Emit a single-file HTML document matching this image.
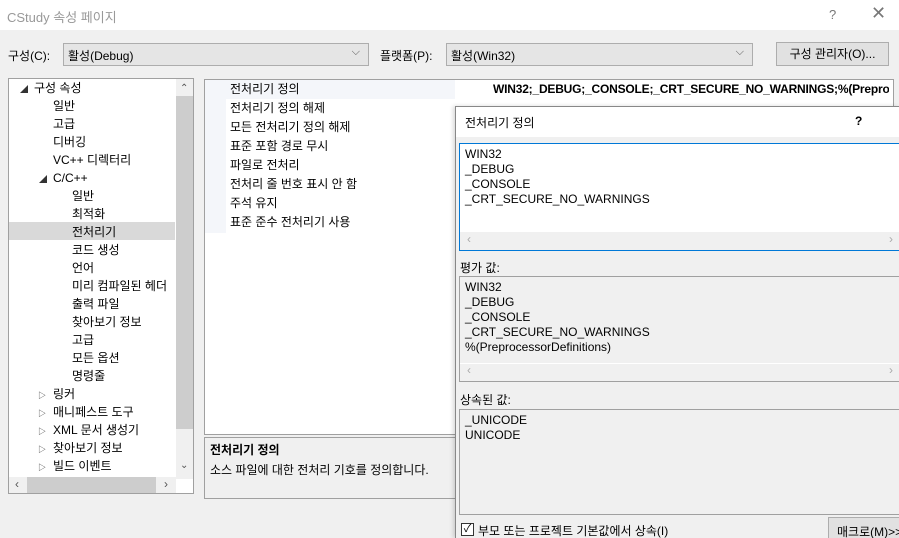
<!DOCTYPE html>
<html style="overflow:hidden"><head><meta charset="utf-8"><style>
*{box-sizing:border-box;margin:0;padding:0}
html,body{width:899px;height:538px;overflow:hidden}
body{background:#f0f0f0;font-family:"Liberation Sans","Noto Sans CJK KR",sans-serif;font-size:12px;color:#000;position:relative}
.a{position:absolute;white-space:nowrap}
.combo{position:absolute;background:#e5e5e5;border:1px solid #adadad;height:23px;padding:3px 0 0 4px}
.combo .v{position:absolute;right:8px;top:2px;color:#555;font-size:11px}
.t{position:absolute;white-space:nowrap;line-height:18px}
.tri{font-size:8px;color:#333}
</style></head><body>
<div class="a" style="left:0;top:0;width:899px;height:30px;background:#fff"></div>
<div class="a" style="left:7px;top:7px;font-size:13px;color:#999">CStudy 속성 페이지</div>
<div class="a" style="left:829px;top:7px;color:#777;font-size:13px">?</div>
<div class="a" style="left:871px;top:3px;color:#777;font-size:18px">✕</div>

<div class="a" style="left:8px;top:47px">구성(C):</div>
<div class="combo" style="left:63px;top:43px;width:306px">활성(Debug)<span class="v">⌵</span></div>
<div class="a" style="left:380px;top:47px">플랫폼(P):</div>
<div class="combo" style="left:446px;top:43px;width:307px">활성(Win32)<span class="v">⌵</span></div>
<div class="a" style="left:776px;top:42px;width:113px;height:24px;background:#e1e1e1;border:1px solid #adadad;text-align:center;line-height:22px">구성 관리자(O)...</div>

<!-- tree -->
<div class="a" style="left:8px;top:78px;width:186px;height:416px;background:#fff;border:1px solid #a0a0a0"></div>
<div class="a" style="left:176px;top:79px;width:17px;height:400px;background:#f0f0f0"></div>
<div class="a" style="left:176px;top:96px;width:17px;height:333px;background:#cdcdcd"></div>
<div class="a" style="left:180px;top:83px;font-size:10px;color:#555">⌃</div>
<div class="a" style="left:180px;top:460px;font-size:10px;color:#555">⌄</div>
<div class="a" style="left:9px;top:477px;width:167px;height:16px;background:#f0f0f0"></div>
<div class="a" style="left:27px;top:477px;width:129px;height:16px;background:#cdcdcd"></div>
<div class="a" style="left:15px;top:477px;color:#555">‹</div>
<div class="a" style="left:164px;top:477px;color:#555">›</div>
<div class="a" style="left:9px;top:222px;width:166px;height:18px;background:#d9d9d9"></div>
<div class="t" style="left:20px;top:79px"><span class="tri">◢</span></div>
<div class="t" style="left:34px;top:79px">구성 속성</div>
<div class="t" style="left:53px;top:97px">일반</div>
<div class="t" style="left:53px;top:115px">고급</div>
<div class="t" style="left:53px;top:133px">디버깅</div>
<div class="t" style="left:53px;top:151px">VC++ 디렉터리</div>
<div class="t" style="left:39px;top:169px"><span class="tri">◢</span></div>
<div class="t" style="left:53px;top:169px">C/C++</div>
<div class="t" style="left:72px;top:187px">일반</div>
<div class="t" style="left:72px;top:205px">최적화</div>
<div class="t" style="left:72px;top:223px">전처리기</div>
<div class="t" style="left:72px;top:241px">코드 생성</div>
<div class="t" style="left:72px;top:259px">언어</div>
<div class="t" style="left:72px;top:277px">미리 컴파일된 헤더</div>
<div class="t" style="left:72px;top:295px">출력 파일</div>
<div class="t" style="left:72px;top:313px">찾아보기 정보</div>
<div class="t" style="left:72px;top:331px">고급</div>
<div class="t" style="left:72px;top:349px">모든 옵션</div>
<div class="t" style="left:72px;top:367px">명령줄</div>
<div class="t" style="left:38px;top:385px"><span class="tri">▷</span></div><div class="t" style="left:53px;top:385px">링커</div>
<div class="t" style="left:38px;top:403px"><span class="tri">▷</span></div><div class="t" style="left:53px;top:403px">매니페스트 도구</div>
<div class="t" style="left:38px;top:421px"><span class="tri">▷</span></div><div class="t" style="left:53px;top:421px">XML 문서 생성기</div>
<div class="t" style="left:38px;top:439px"><span class="tri">▷</span></div><div class="t" style="left:53px;top:439px">찾아보기 정보</div>
<div class="t" style="left:38px;top:457px"><span class="tri">▷</span></div><div class="t" style="left:53px;top:457px">빌드 이벤트</div>

<!-- grid -->
<div class="a" style="left:204px;top:79px;width:690px;height:356px;background:#fff;border:1px solid #a0a0a0"></div>
<div class="a" style="left:205px;top:80px;width:250px;height:153px;background:#f4f6fa"></div>
<div class="a" style="left:226px;top:99px;width:229px;height:134px;background:#fff"></div>
<div class="t" style="left:230px;top:80px">전처리기 정의</div>
<div class="t" style="left:230px;top:99px">전처리기 정의 해제</div>
<div class="t" style="left:230px;top:118px">모든 전처리기 정의 해제</div>
<div class="t" style="left:230px;top:137px">표준 포함 경로 무시</div>
<div class="t" style="left:230px;top:156px">파일로 전처리</div>
<div class="t" style="left:230px;top:175px">전처리 줄 번호 표시 안 함</div>
<div class="t" style="left:230px;top:194px">주석 유지</div>
<div class="t" style="left:230px;top:213px">표준 준수 전처리기 사용</div>
<div class="t" style="left:493px;top:80px;font-weight:bold;width:396px;overflow:hidden;letter-spacing:-0.2px">WIN32;_DEBUG;_CONSOLE;_CRT_SECURE_NO_WARNINGS;%(PreprocessorDefinitions)</div>

<div class="a" style="left:204px;top:437px;width:260px;height:62px;border:1px solid #a0a0a0"></div>
<div class="a" style="left:210px;top:441px;font-weight:bold">전처리기 정의</div>
<div class="a" style="left:210px;top:461px">소스 파일에 대한 전처리 기호를 정의합니다.</div>

<!-- dialog -->
<div class="a" style="left:455px;top:106px;width:444px;height:432px;background:#f0f0f0;border:1px solid #888;border-right:none;border-bottom:none;box-shadow:-2px 0 4px rgba(0,0,0,.15)"></div>
<div class="a" style="left:456px;top:107px;width:443px;height:30px;background:#fff"></div>
<div class="a" style="left:465px;top:114px">전처리기 정의</div>
<div class="a" style="left:855px;top:114px;font-weight:bold">?</div>
<div class="a" style="left:459px;top:143px;width:440px;height:108px;background:#fff;border:1px solid #0078d7;border-right:none"></div>
<div class="a" style="left:460px;top:232px;width:439px;height:18px;background:#f0f0f0"></div>
<div class="a" style="left:467px;top:232px;color:#aaa">‹</div>
<div class="a" style="left:889px;top:232px;color:#aaa">›</div>
<div class="a" style="left:465px;top:147px;line-height:15px">WIN32<br>_DEBUG<br>_CONSOLE<br>_CRT_SECURE_NO_WARNINGS</div>

<div class="a" style="left:460px;top:259px">평가 값:</div>
<div class="a" style="left:459px;top:276px;width:440px;height:106px;border:1px solid #a0a0a0;border-right:none"></div>
<div class="a" style="left:460px;top:363px;width:439px;height:18px;border-top:1px solid #fff"></div>
<div class="a" style="left:467px;top:363px;color:#aaa">‹</div>
<div class="a" style="left:889px;top:363px;color:#aaa">›</div>
<div class="a" style="left:465px;top:280px;line-height:15px">WIN32<br>_DEBUG<br>_CONSOLE<br>_CRT_SECURE_NO_WARNINGS<br>%(PreprocessorDefinitions)</div>

<div class="a" style="left:460px;top:391px">상속된 값:</div>
<div class="a" style="left:459px;top:409px;width:440px;height:106px;border:1px solid #a0a0a0;border-right:none"></div>
<div class="a" style="left:465px;top:413px;line-height:15px">_UNICODE<br>UNICODE</div>

<div class="a" style="left:461px;top:523px;width:13px;height:13px;border:1px solid #333;background:#fff;font-size:11px;line-height:11px;text-align:center">✓</div>
<div class="a" style="left:478px;top:522px">부모 또는 프로젝트 기본값에서 상속(I)</div>
<div class="a" style="left:828px;top:517px;width:71px;height:21px;background:#e1e1e1;border:1px solid #adadad;border-right:none;border-bottom:none;padding:5px 0 0 8px;overflow:hidden">매크로(M)&gt;&gt;</div>
</body></html>
